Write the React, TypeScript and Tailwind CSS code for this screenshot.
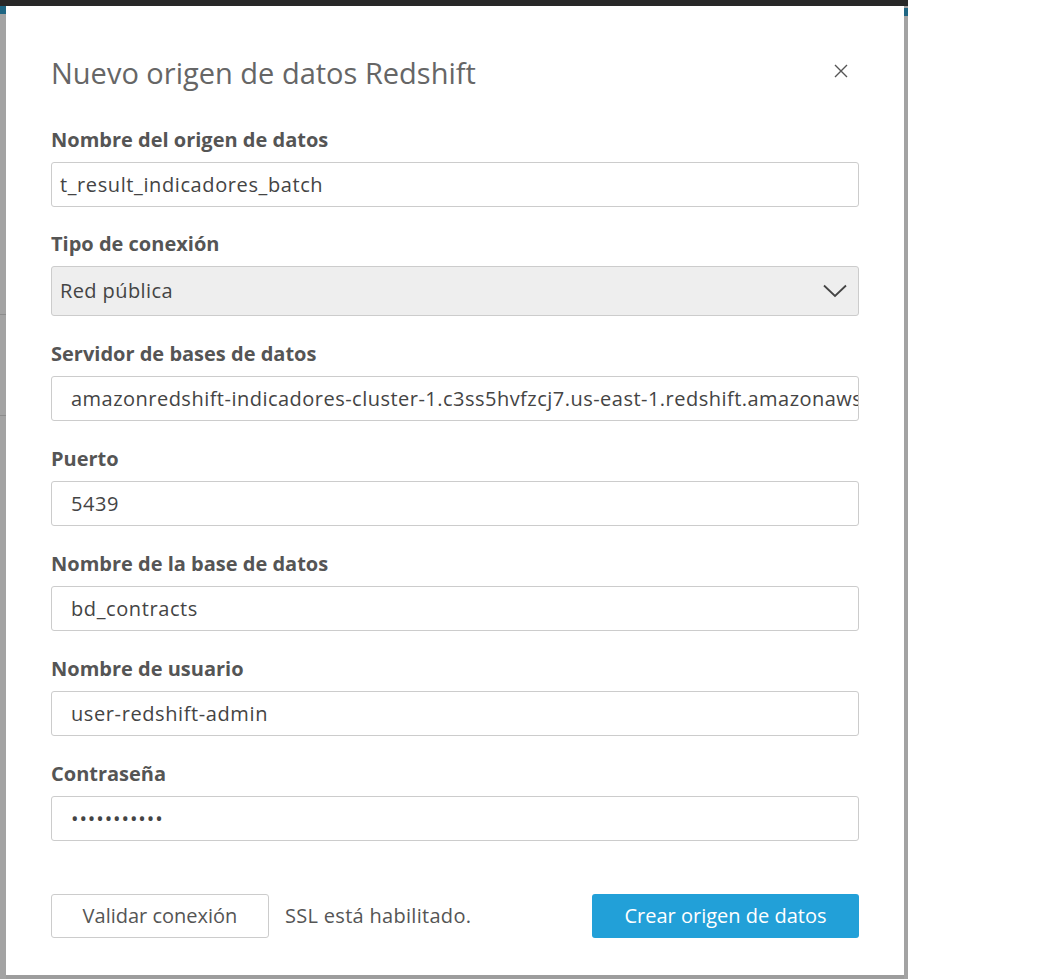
import React from "react";

const font = { fontFamily: '"Open Sans", "Noto Sans", sans-serif' };

function Label({ children }: { children: React.ReactNode }) {
  return <div className="h-[24px] leading-[24px] text-[20px] font-bold text-[#555555] mb-[10px]">{children}</div>;
}

function Field({ label, value, pl = "pl-[19px]", cls = "", tr = "tracking-[0.6px]" }: { label: string; value: string; pl?: string; cls?: string; tr?: string }) {
  return (
    <div className={`flex flex-col ${cls}`}>
      <Label>{label}</Label>
      <div className={`h-[45px] border border-[#cccccc] rounded-[3px] flex items-center ${pl} ${tr} text-[20px] text-[#444444] overflow-hidden whitespace-nowrap`}>
        {value}
      </div>
    </div>
  );
}

export default function App() {
  return (
    <div className="w-[1046px] h-[979px] bg-white flex overflow-hidden" style={font}>
      <div className="w-[908px] h-full flex flex-col bg-[#9d9d9d]">
        <div className="h-[6px] bg-[#282828] shrink-0" />
        <div className="flex flex-1">
          <div className="w-[6px] flex flex-col bg-[#a3a3a3]">
            <div className="h-[8px] bg-[#1f6683]" />
            <div className="h-[300px]" />
            <div className="h-[1px] bg-[#8c8c8c]" />
            <div className="h-[100px]" />
            <div className="h-[1px] bg-[#8c8c8c]" />
          </div>
          <div className="w-[898px] h-[969px] bg-white flex flex-col px-[45px] pt-[49px]">
            <div className="flex items-center justify-between h-[36px]">
              <div className="text-[29px] text-[#666666] leading-[36px]">Nuevo origen de datos Redshift</div>
              <svg width="14" height="14" viewBox="0 0 14 14" className="mr-[11px] mt-[-4px]">
                <path d="M1 1L13 13M13 1L1 13" stroke="#555" strokeWidth="1.4" />
              </svg>
            </div>
            <div className="flex flex-col mt-[37px]">
              <Field label="Nombre del origen de datos" value="t_result_indicadores_batch" pl="pl-[8px]" />
              <div className="flex flex-col mt-[25px]">
                <Label>Tipo de conexión</Label>
                <div className="h-[50px] border border-[#cccccc] rounded-[3px] bg-[#eeeeee] flex items-center justify-between pl-[8px] pr-[11px] text-[20px] tracking-[0.4px] text-[#444444]">
                  <span>Red pública</span>
                  <svg width="24" height="14" viewBox="0 0 24 14">
                    <path d="M1 1.5L12 12L23 1.5" stroke="#444" strokeWidth="1.8" fill="none" />
                  </svg>
                </div>
              </div>
              <Field cls="mt-[26px]" tr="tracking-[0.48px]" label="Servidor de bases de datos" value="amazonredshift-indicadores-cluster-1.c3ss5hvfzcj7.us-east-1.redshift.amazonaws.com" />
              <Field cls="mt-[26px]" label="Puerto" value="5439" />
              <Field cls="mt-[26px]" label="Nombre de la base de datos" value="bd_contracts" />
              <Field cls="mt-[26px]" label="Nombre de usuario" value="user-redshift-admin" />
              <Field cls="mt-[26px]" tr="tracking-[0.9px]" label="Contraseña" value="•••••••••••" />
            </div>
            <div className="flex items-center mt-[53px] h-[44px]">
              <div className="w-[218px] h-[44px] border border-[#cccccc] rounded-[3px] flex items-center justify-center text-[20px] text-[#555555]">
                Validar conexión
              </div>
              <div className="ml-[16px] text-[20px] tracking-[0.3px] text-[#555555]">SSL está habilitado.</div>
              <div className="ml-auto w-[267px] h-[44px] rounded-[3px] bg-[#22a0d8] flex items-center justify-center text-[20px] text-white">
                Crear origen de datos
              </div>
            </div>
          </div>
          <div className="w-[4px] flex flex-col bg-[#a3a3a3]">
            <div className="h-[2px]" />
            <div className="h-[8px] bg-[#1f6683]" />
          </div>
        </div>
      </div>
      <div className="flex-1 bg-white" />
    </div>
  );
}
